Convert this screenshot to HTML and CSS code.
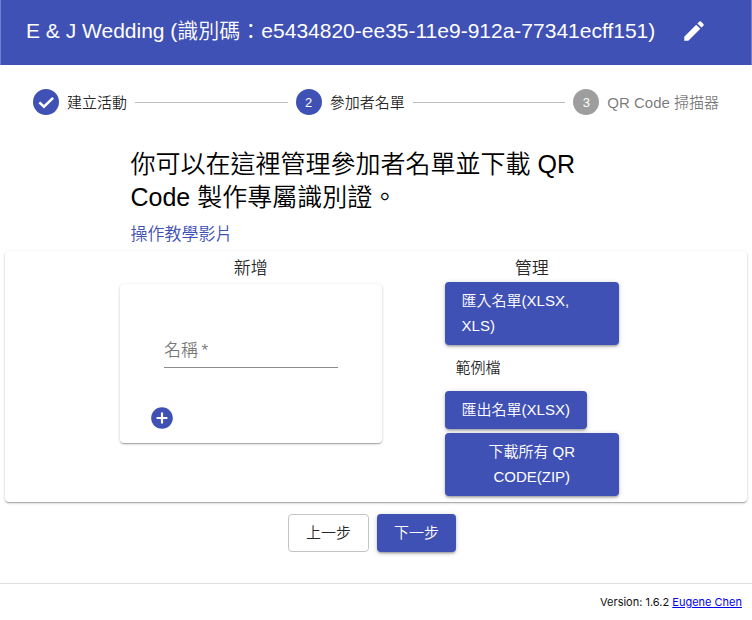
FILE: index.html
```html
<!DOCTYPE html>
<html lang="zh-Hant">
<head>
<meta charset="utf-8">
<meta name="viewport" content="width=device-width, initial-scale=1">
<title>E &amp; J Wedding</title>
<link rel="stylesheet" href="styles.css">
</head>
<body>
<header class="app-bar">
  <h1 class="app-title">E &amp; J Wedding (識別碼：e5434820-ee35-11e9-912a-77341ecff151)</h1>
  <button class="icon-button edit" type="button" aria-label="編輯">
    <svg class="icon" viewBox="0 0 24 24"><path d="M3 17.25V21h3.75L17.81 9.94l-3.75-3.75L3 17.25zM20.71 7.04c.39-.39.39-1.02 0-1.41l-2.34-2.34a.9959.9959 0 0 0-1.41 0l-1.83 1.83 3.75 3.75 1.83-1.83z"/></svg>
  </button>
</header>

<ol class="stepper">
  <li class="step">
    <span class="badge"><svg class="check" viewBox="0 0 24 24"><path d="M4 12.5l5.5 5.2L20.500 7"/></svg></span>
    <span>建立活動</span>
  </li>
  <li class="line" aria-hidden="true"></li>
  <li class="step" aria-current="step">
    <span class="badge">2</span>
    <span>參加者名單</span>
  </li>
  <li class="line" aria-hidden="true"></li>
  <li class="step pending">
    <span class="badge">3</span>
    <span>QR Code 掃描器</span>
  </li>
</ol>

<main>
  <div class="intro">
    <h2 class="heading">你可以在這裡管理參加者名單並下載 QR Code 製作專屬識別證。</h2>
    <a class="tutorial" href="#tutorial">操作教學影片</a>
  </div>

  <div class="paper panel">
    <section class="column">
      <h3 class="column-title">新增</h3>
      <form class="paper add-form">
        <div class="field">
          <input class="field-input" id="name" type="text" required>
          <label class="field-label" for="name">名稱<span class="required">&thinsp;*</span></label>
        </div>
        <button class="icon-button add" type="button" aria-label="新增">
          <svg class="icon" viewBox="0 0 24 24"><path d="M12 2C6.48 2 2 6.48 2 12s4.48 10 10 10 10-4.48 10-10S17.52 2 12 2zm5 11h-4v4h-2v-4H7v-2h4V7h2v4h4v2z"/></svg>
        </button>
      </form>
    </section>
    <section class="column">
      <h3 class="column-title">管理</h3>
      <div class="tools">
        <button class="button primary import" type="button">匯入名單(XLSX, XLS)</button>
        <a class="button text" href="#sample">範例檔</a>
        <button class="button primary" type="button">匯出名單(XLSX)</button>
        <button class="button primary" type="button">下載所有 QR CODE(ZIP)</button>
      </div>
    </section>
  </div>

  <div class="actions">
    <button class="button outlined" type="button">上一步</button>
    <button class="button primary" type="button">下一步</button>
  </div>
</main>

<footer class="footer">Version: 1.6.2 <a href="#author">Eugene Chen</a></footer>
</body>
</html>
```

FILE: styles.css
```css
:root {
  --primary: #3f51b5;
  --ink: rgba(0, 0, 0, 0.87);
  --muted: rgba(0, 0, 0, 0.54);
}

* {
  box-sizing: border-box;
}

body {
  margin: 0;
  background: #fff;
  color: var(--ink);
  font: 350 15px/25px "Liberation Sans", "Noto Sans CJK TC", sans-serif;
}

h1, h2, h3 {
  margin: 0;
  font-weight: inherit;
}

.app-bar {
  display: flex;
  align-items: center;
  gap: 18px;
  min-height: 65px;
  padding: 0 25px 3px;
  background: var(--primary);
  border: solid #7480ca;
  border-width: 0 1px;
  color: #fff;
}

.app-title {
  font-size: 21px;
  line-height: 32px;
}

.icon-button {
  display: flex;
  padding: 8px;
  border: 0;
  background: none;
  color: inherit;
  cursor: pointer;
}

.icon {
  width: 26px;
  height: 26px;
  fill: currentColor;
}

.stepper {
  display: flex;
  align-items: center;
  gap: 8px;
  margin: 0;
  padding: 24px 33px;
  list-style: none;
}

.step {
  display: flex;
  align-items: center;
  gap: 8px;
  white-space: nowrap;
}

.badge {
  display: flex;
  align-items: center;
  justify-content: center;
  width: 26px;
  height: 26px;
  border-radius: 50%;
  background: var(--primary);
  color: #fff;
  font-size: 13px;
}

.check {
  width: 20px;
  height: 20px;
  fill: none;
  stroke: #fff;
  stroke-width: 3;
}

.pending {
  color: var(--muted);
}

.pending .badge {
  background: #9e9e9e;
}

.line {
  flex: 1;
  height: 1px;
  background: #bdbdbd;
}

.intro {
  max-width: 491px;
  margin: 0 auto;
  padding: 9px 0 4px;
}

.heading {
  color: #000;
  font-size: 25px;
  line-height: 33px;
}

.tutorial {
  display: block;
  width: max-content;
  margin-top: 8px;
  color: var(--primary);
  font-size: 17px;
  text-decoration: none;
}

.paper {
  border-radius: 4px;
  background: #fff;
  box-shadow: 0 1px 3px rgba(0, 0, 0, 0.2), 0 1px 1px rgba(0, 0, 0, 0.14), 0 2px 1px -1px rgba(0, 0, 0, 0.12);
}

.panel {
  display: grid;
  grid-template-columns: 3fr 2fr;
  gap: 63px;
  margin: 0 5px;
  padding: 4px 128px 6px 115px;
}

.column-title {
  font-size: 17px;
  line-height: 27px;
  text-align: center;
}

.add-form {
  margin-top: 2px;
  padding: 53px 44px 4px;
}

.field {
  position: relative;
  border-bottom: 1px solid #8c8c8c;
}

.field-input {
  display: block;
  width: 100%;
  height: 30px;
  padding: 0;
  border: 0;
  outline: 0;
  background: none;
  font: inherit;
  font-size: 17px;
}

.field-label {
  position: absolute;
  top: 1px;
  left: 0;
  color: var(--muted);
  font-size: 17px;
  pointer-events: none;
}

.required {
  font-size: 17px;
}

.field-input:focus + .field-label,
.field-input:valid + .field-label {
  top: -20px;
  font-size: 13px;
}

.add {
  margin: 29px 0 0 -23px;
  color: var(--primary);
}

.tools {
  display: flex;
  flex-direction: column;
  align-items: flex-start;
  gap: 4px;
}

.button {
  padding: 6px 17px 7px;
  border: 0;
  border-radius: 4px;
  background: none;
  color: var(--ink);
  font: inherit;
  line-height: 25px;
  text-align: center;
  text-decoration: none;
  cursor: pointer;
}

.primary {
  background: var(--primary);
  color: #fff;
  box-shadow: 0 1px 5px rgba(0, 0, 0, 0.2), 0 2px 2px rgba(0, 0, 0, 0.14), 0 3px 1px -2px rgba(0, 0, 0, 0.12);
}

.import {
  text-align: left;
}

.text {
  padding: 6px 11px 7px;
}

.outlined {
  padding: 5px 17px 6px;
  border: 1px solid #c4c4c4;
}

.actions {
  display: flex;
  justify-content: center;
  gap: 8px;
  padding: 12px 8px 31px 0;
}

.footer {
  padding: 6px 10px;
  border-top: 1px solid #e0e0e0;
  color: #111;
  font-family: Inter, "Liberation Sans", sans-serif;
  font-size: 11px;
  font-weight: 400;
  text-align: right;
}

.footer a {
  color: #0000ee;
}
```
